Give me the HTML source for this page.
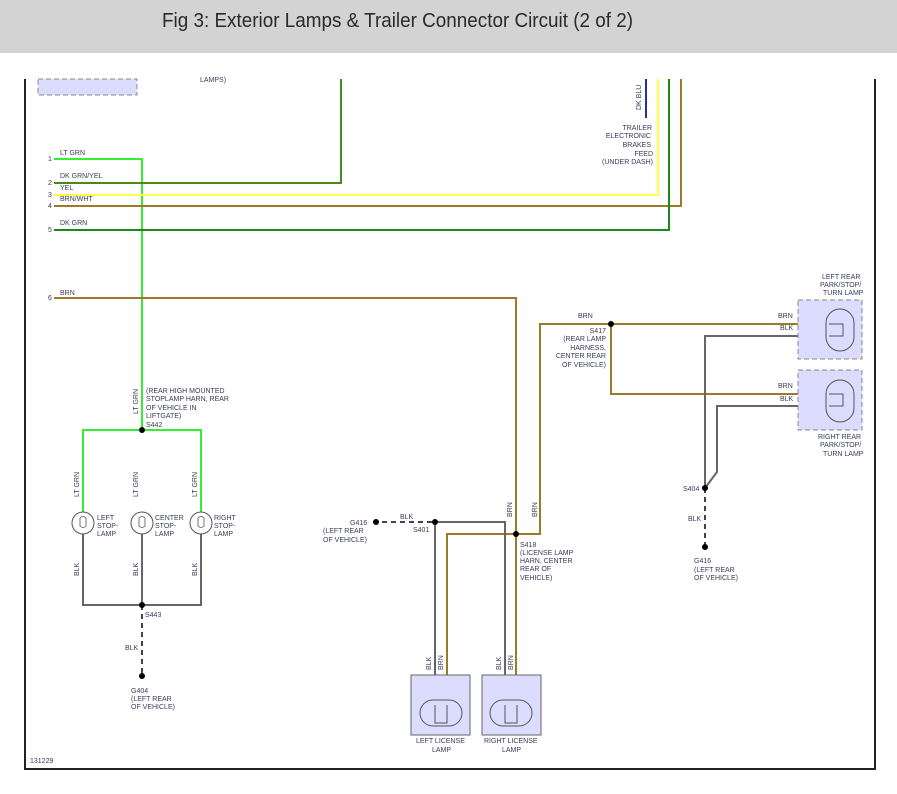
<!DOCTYPE html>
<html><head><meta charset="utf-8"><style>
html,body{margin:0;padding:0;background:#fff;width:897px;height:794px;overflow:hidden}
svg text{font-family:"Liberation Sans",Arial,sans-serif;font-size:7px;fill:#3a3a5a}
</style></head><body>
<svg width="897" height="794" viewBox="0 0 897 794" xmlns="http://www.w3.org/2000/svg">
<rect x="0" y="0" width="897" height="53" fill="#d3d3d3"/>
<text x="162" y="27" style="font-size:20px;fill:#2a2a2a" textLength="471" lengthAdjust="spacingAndGlyphs">Fig 3: Exterior Lamps &amp; Trailer Connector Circuit (2 of 2)</text>
<!-- frame -->
<path d="M25 79 V769 H875 V79" fill="none" stroke="#222" stroke-width="2"/>
<rect x="38" y="79" width="99" height="16" fill="#dcdcff" stroke="#888" stroke-dasharray="5,3"/>
<text x="200" y="82">LAMPS)</text>
<g fill="none" stroke-width="2">
<path d="M54 159 H142 V430" stroke="#33ee33"/>
<path d="M54 183 H341 V79" stroke="#4a8a1a"/>
<path d="M54 195 H658 V79" stroke="#ffff44"/>
<path d="M54 206 H681 V79" stroke="#9b7a2a"/>
<path d="M54 230 H669 V79" stroke="#1a8a1a"/>
<path d="M646 79 V118" stroke="#223399"/>
<path d="M54 298 H516 V705" stroke="#9b7a2a"/>
<path d="M516 534 H540 V324 H850" stroke="#9b7a2a"/>
<path d="M611 324 V394 H850" stroke="#9b7a2a"/>
<path d="M516 534 H447 V705" stroke="#9b7a2a"/>
<path d="M850 336 H705 V488" stroke="#666"/>
<path d="M850 406 H717 V472 L705 488" stroke="#666"/>
<path d="M435 522 H505 V705 M435 522 V705" stroke="#666"/>
<path d="M83 523 V430 H201 V523" stroke="#33ee33"/>
<path d="M83 523 V605 H201 V523 M142 523 V605" stroke="#666"/>
<path d="M142 605 V675 M705 488 V547 M373 522 H435" stroke="#444" stroke-dasharray="5,4"/>
</g>
<g fill="#000">
<circle cx="142" cy="430" r="3"/><circle cx="142" cy="605" r="3"/><circle cx="142" cy="676" r="3"/>
<circle cx="611" cy="324" r="3"/><circle cx="516" cy="534" r="3"/><circle cx="435" cy="522" r="3"/>
<circle cx="705" cy="488" r="3"/><circle cx="705" cy="547" r="3"/><circle cx="376" cy="522" r="3"/>
</g>
<!-- stop lamps -->
<g fill="#fff" stroke="#555">
<circle cx="83" cy="523" r="11"/><circle cx="142" cy="523" r="11"/><circle cx="201" cy="523" r="11"/>
</g>
<g fill="none" stroke="#555" stroke-width="0.8">
<path d="M80 518 q3 -3 6 0 v8 q-3 3 -6 0z"/><path d="M139 518 q3 -3 6 0 v8 q-3 3 -6 0z"/><path d="M198 518 q3 -3 6 0 v8 q-3 3 -6 0z"/>
</g>
<!-- rear lamps -->
<rect x="798" y="300" width="64" height="59" fill="#dcdcff" stroke="#888" stroke-dasharray="5,3"/>
<rect x="798" y="370" width="64" height="60" fill="#dcdcff" stroke="#888" stroke-dasharray="5,3"/>
<g fill="none" stroke="#555">
<rect x="826" y="309" width="28" height="42" rx="14"/>
<rect x="826" y="380" width="28" height="42" rx="14"/>
<path d="M829 324 H843 V336 H829 M829 394 H843 V406 H829"/>
</g>
<!-- license lamps -->
<rect x="411" y="675" width="59" height="60" fill="#dcdcff" stroke="#666"/>
<rect x="482" y="675" width="59" height="60" fill="#dcdcff" stroke="#666"/>
<g fill="none" stroke="#555">
<rect x="420" y="700" width="42" height="26" rx="13"/>
<rect x="490" y="700" width="42" height="26" rx="13"/>
<path d="M435 705 V723 H447 V705 M505 705 V723 H517 V705"/>
</g>
<!-- labels -->
<text x="48" y="161">1</text><text x="48" y="185">2</text><text x="48" y="197">3</text><text x="48" y="208">4</text><text x="48" y="232">5</text><text x="48" y="300">6</text>
<text x="60" y="155">LT GRN</text><text x="60" y="178">DK GRN/YEL</text><text x="60" y="190">YEL</text><text x="60" y="201">BRN/WHT</text><text x="60" y="225">DK GRN</text><text x="60" y="295">BRN</text>
<text transform="translate(641,110) rotate(-90)">DK BLU</text>
<g text-anchor="end"><text x="652" y="130">TRAILER</text><text x="651" y="138">ELECTRONIC</text><text x="651" y="147">BRAKES</text><text x="653" y="156">FEED</text><text x="653" y="164">(UNDER DASH)</text></g>
<text transform="translate(138,414) rotate(-90)">LT GRN</text>
<text x="146" y="393">(REAR HIGH MOUNTED</text><text x="146" y="401">STOPLAMP HARN, REAR</text><text x="146" y="410">OF VEHICLE IN</text><text x="146" y="418">LIFTGATE)</text><text x="146" y="427">S442</text>
<text transform="translate(79,497) rotate(-90)">LT GRN</text><text transform="translate(138,497) rotate(-90)">LT GRN</text><text transform="translate(197,497) rotate(-90)">LT GRN</text>
<text x="97" y="520">LEFT</text><text x="97" y="528">STOP-</text><text x="97" y="536">LAMP</text>
<text x="155" y="520">CENTER</text><text x="155" y="528">STOP-</text><text x="155" y="536">LAMP</text>
<text x="214" y="520">RIGHT</text><text x="214" y="528">STOP-</text><text x="214" y="536">LAMP</text>
<text transform="translate(79,576) rotate(-90)">BLK</text><text transform="translate(138,576) rotate(-90)">BLK</text><text transform="translate(197,576) rotate(-90)">BLK</text>
<text x="145" y="617">S443</text><text x="125" y="650">BLK</text>
<text x="131" y="693">G404</text><text x="131" y="701">(LEFT REAR</text><text x="131" y="709">OF VEHICLE)</text>
<text x="350" y="525">G416</text><text x="323" y="533">(LEFT REAR</text><text x="323" y="542">OF VEHICLE)</text>
<text x="400" y="519">BLK</text><text x="413" y="532">S401</text>
<text transform="translate(512,517) rotate(-90)">BRN</text><text transform="translate(537,517) rotate(-90)">BRN</text>
<text x="520" y="547">S418</text><text x="520" y="555">(LICENSE LAMP</text><text x="520" y="563">HARN, CENTER</text><text x="520" y="571">REAR OF</text><text x="520" y="580">VEHICLE)</text>
<text transform="translate(431,670) rotate(-90)">BLK</text><text transform="translate(443,670) rotate(-90)">BRN</text>
<text transform="translate(501,670) rotate(-90)">BLK</text><text transform="translate(513,670) rotate(-90)">BRN</text>
<text x="416" y="743">LEFT LICENSE</text><text x="432" y="752">LAMP</text>
<text x="484" y="743">RIGHT LICENSE</text><text x="502" y="752">LAMP</text>
<text x="578" y="318">BRN</text>
<g text-anchor="end"><text x="606" y="333">S417</text><text x="606" y="341">(REAR LAMP</text><text x="606" y="350">HARNESS,</text><text x="606" y="358">CENTER REAR</text><text x="606" y="367">OF VEHICLE)</text></g>
<text x="778" y="318">BRN</text><text x="780" y="330">BLK</text><text x="778" y="388">BRN</text><text x="780" y="401">BLK</text>
<text x="822" y="279">LEFT REAR</text><text x="820" y="287">PARK/STOP/</text><text x="823" y="295">TURN LAMP</text>
<text x="818" y="439">RIGHT REAR</text><text x="820" y="447">PARK/STOP/</text><text x="823" y="456">TURN LAMP</text>
<text x="683" y="491">S404</text><text x="688" y="521">BLK</text>
<text x="694" y="563">G416</text><text x="694" y="572">(LEFT REAR</text><text x="694" y="580">OF VEHICLE)</text>
<text x="30" y="763">131229</text>
</svg>
</body></html>
